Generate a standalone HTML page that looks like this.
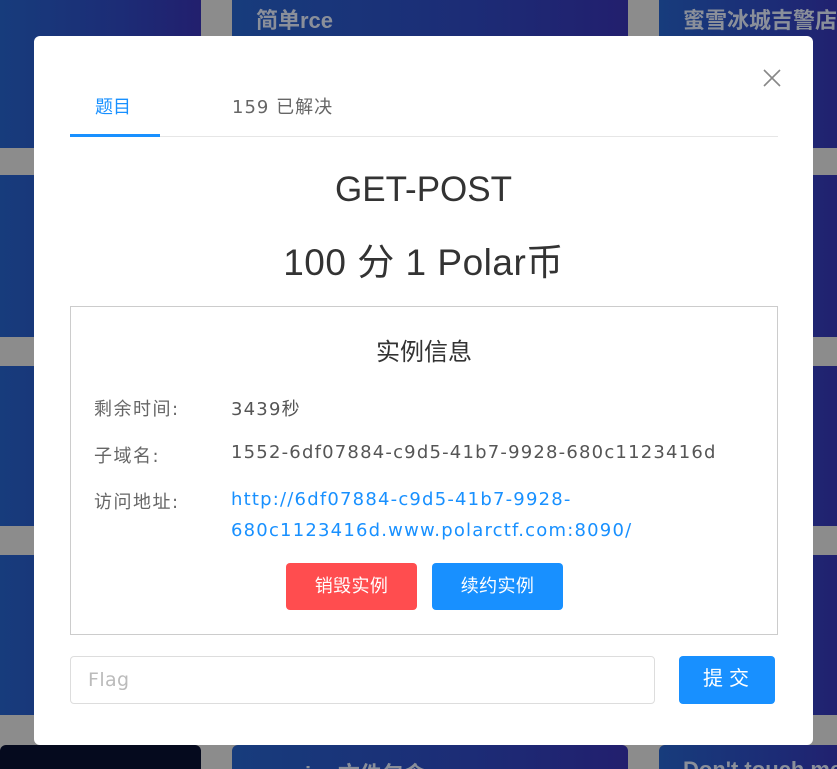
<!DOCTYPE html>
<html><head><meta charset="utf-8"><style>
*{margin:0;padding:0;box-sizing:border-box}
html,body{width:837px;height:769px;overflow:hidden}
body{background:#8c8c8c;position:relative;font-family:"Liberation Sans","Noto Sans CJK SC",sans-serif}
.c{position:absolute;background:linear-gradient(90deg,#173c7c,#1c2c76 60%,#221f6e);border-radius:6px;overflow:hidden}
.ct{position:absolute;color:#8a8f9a;font-size:22px;font-weight:bold;white-space:nowrap}
.a{position:absolute;white-space:nowrap}
#d{position:absolute;left:34px;top:36px;width:779px;height:709px;background:#fff;border-radius:6px}
.dv{font-family:"DejaVu Sans","Noto Sans CJK SC",sans-serif;letter-spacing:0.4px}
.lbl{color:#666;font-size:18px;letter-spacing:1.5px}
.val{color:#555;font-size:18px;letter-spacing:1.2px}
.btn{position:absolute;color:#fff;font-size:18px;text-align:center;border-radius:4px;line-height:47px}
</style></head><body>
<div class="c" style="left:0;top:-10px;width:201px;height:158px;border-radius:0"></div>
<div class="c" style="left:232px;top:-10px;width:396px;height:158px"></div>
<div class="c" style="left:659px;top:-10px;width:190px;height:158px"></div>
<div class="ct" style="left:256px;top:3px">简单rce</div>
<div class="ct" style="left:683px;top:3px">蜜雪冰城吉警店</div>
<div class="c" style="left:0;top:175px;width:201px;height:162px;border-radius:0"></div>
<div class="c" style="left:659px;top:175px;width:190px;height:162px"></div>
<div class="c" style="left:0;top:366px;width:201px;height:160px;border-radius:0"></div>
<div class="c" style="left:659px;top:366px;width:190px;height:160px"></div>
<div class="c" style="left:0;top:555px;width:201px;height:160px;border-radius:0"></div>
<div class="c" style="left:659px;top:555px;width:190px;height:160px"></div>
<div class="c" style="left:0;top:745px;width:201px;height:40px;background:#050a1e"></div>
<div class="c" style="left:232px;top:745px;width:396px;height:40px"></div>
<div class="c" style="left:659px;top:745px;width:190px;height:40px"></div>
<div class="ct" style="left:256px;top:757px">session文件包含</div>
<div class="ct" style="left:683px;top:757px">Don't touch me</div>

<div id="d">
<svg class="a" style="left:729px;top:33px" width="18" height="18" viewBox="0 0 18 18"><path d="M1 1L17 17M17 1L1 17" stroke="#888" stroke-width="1.6"/></svg>
<div class="a" style="left:61px;top:57px;color:#1890ff;font-size:18px">题目</div>
<div class="a dv" style="left:198px;top:57px;color:#666;font-size:18px;letter-spacing:1px">159 已解决</div>
<div class="a" style="left:36px;top:100px;width:708px;height:1px;background:#e6e6e6"></div>
<div class="a" style="left:36px;top:98px;width:90px;height:3px;background:#1890ff"></div>
<div class="a" style="left:0;width:779px;top:134px;text-align:center;font-size:35px;color:#333">GET-POST</div>
<div class="a" style="left:0;width:779px;top:196px;text-align:center;font-size:37px;color:#333;letter-spacing:0.5px">100 分 1 Polar币</div>
<div class="a" style="left:36px;top:270px;width:708px;height:329px;border:1px solid #ccc"></div>
<div class="a" style="left:36px;width:708px;top:296px;text-align:center;font-size:24px;color:#333">实例信息</div>
<div class="a lbl dv" style="left:60px;top:359px">剩余时间:</div>
<div class="a val dv" style="left:197px;top:359px">3439秒</div>
<div class="a lbl dv" style="left:60px;top:406px">子域名:</div>
<div class="a val dv" style="left:197px;top:406px">1552-6df07884-c9d5-41b7-9928-680c1123416d</div>
<div class="a lbl dv" style="left:60px;top:452px">访问地址:</div>
<div class="a dv" style="left:197px;top:448px;color:#1890ff;font-size:18px;letter-spacing:1.2px;line-height:31px">http://6df07884-c9d5-41b7-9928-<br>680c1123416d.www.polarctf.com:8090/</div>
<div class="btn dv" style="left:252px;top:527px;width:131px;height:47px;background:#ff4d4f">销毁实例</div>
<div class="btn dv" style="left:398px;top:527px;width:131px;height:47px;background:#1890ff">续约实例</div>
<div class="a dv" style="left:36px;top:620px;width:585px;height:48px;border:1px solid #ddd;border-radius:4px;color:#bbb;font-size:19px;line-height:46px;padding-left:17px">Flag</div>
<div class="btn" style="left:645px;top:620px;width:96px;height:48px;background:#1890ff;font-size:20px;letter-spacing:6px;padding-left:4px">提交</div>
</div>
</body></html>
